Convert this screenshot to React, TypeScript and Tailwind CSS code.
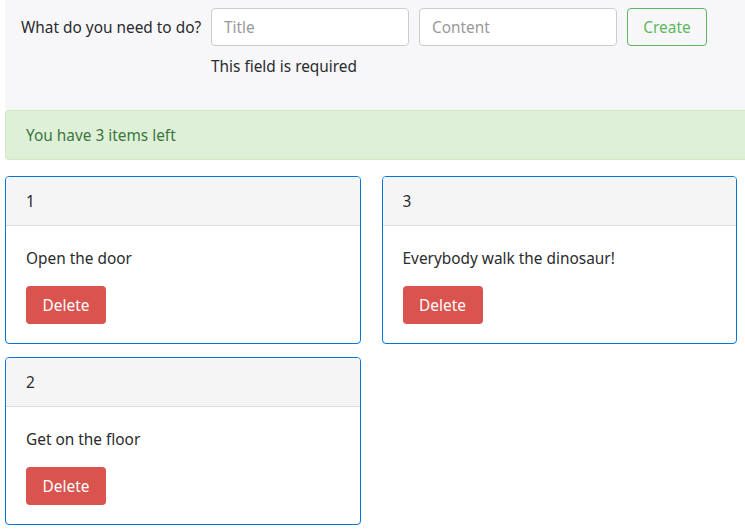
import * as React from "react";

type Todo = { id: number; content: string };

const todos: Todo[] = [
  { id: 1, content: "Open the door" },
  { id: 3, content: "Everybody walk the dinosaur!" },
  { id: 2, content: "Get on the floor" },
];

export default function App() {
  const [title, setTitle] = React.useState("");
  const [content, setContent] = React.useState("");

  return (
    <div
      className="min-h-[531px] bg-white pl-[5px] text-[15.4px] text-[#292b2c]"
      style={{ fontFamily: '"Segoe UI", "Noto Sans", sans-serif' }}
    >
      <div className="h-[110px] bg-[#f7f7f9] pt-2 pl-4">
        <div className="flex items-start gap-[10px]">
          <label className="mt-[9px] w-[180px] shrink-0 whitespace-nowrap leading-[22px]">What do you need to do?</label>
          <div className="flex flex-col">
            <input
              value={title}
              onChange={e => setTitle(e.target.value)}
              placeholder="Title"
              className="h-[38px] w-[198px] rounded-[4px] border border-[#ccc] bg-white px-3 text-[15.4px] placeholder:text-[#999] outline-none"
            />
            <div className="mt-[11px] leading-[20px]">This field is required</div>
          </div>
          <input
            value={content}
            onChange={e => setContent(e.target.value)}
            placeholder="Content"
            className="h-[38px] w-[198px] rounded-[4px] border border-[#ccc] bg-white px-3 text-[15.4px] placeholder:text-[#999] outline-none"
          />
          <button className="h-[38px] w-[80px] rounded-[4px] border border-[#5cb85c] pt-[1px] text-[#5cb85c]">
            Create
          </button>
        </div>
      </div>

      <div className="flex h-[50px] items-center rounded-l-[4px] border border-r-0 border-[#d0e9c6] bg-[#dff0d8] pt-[2px] pl-5 text-[#3c763d]">
        You have 3 items left
      </div>

      <div className="mt-4 grid w-[732px] grid-cols-2 gap-x-[21px] gap-y-[13px]">
        {todos.map(t => (
          <div key={t.id} className="overflow-hidden rounded-[4px] border border-[#0275d8]">
            <div className="flex h-[49px] items-center border-b border-[#ddd] bg-[#f5f5f5] px-5 pt-[2px]">{t.id}</div>
            <div className="px-5 pt-[21px] pb-[19px]">
              <p className="leading-[24px]">{t.content}</p>
              <button className="mt-[15px] block h-[38px] w-[80px] rounded-[4px] bg-[#d9534f] pt-[1px] text-white">Delete</button>
            </div>
          </div>
        ))}
      </div>
    </div>
  );
}
